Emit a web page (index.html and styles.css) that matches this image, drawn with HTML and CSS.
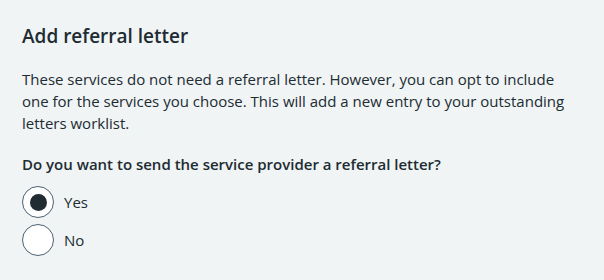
FILE: index.html
```html
<!DOCTYPE html>
<html lang="en">

<head>
  <meta charset="utf-8">
  <title>Add referral letter</title>
  <link rel="stylesheet" href="styles.css">
</head>

<body>
  <section class="referral">
    <h2 class="referral-title">Add referral letter</h2>
    <p class="referral-hint">
      These services do not need a referral letter. However, you can opt to include
      one for the services you choose. This will add a new entry to your outstanding
      letters worklist.
    </p>
    <fieldset class="radios">
      <legend class="radios-legend">Do you want to send the service provider a referral letter?</legend>
      <!-- Yes -->
      <label class="radio">
        <input type="radio" name="referral" value="yes" checked>
        <span class="radio-mark"></span>
        <span class="radio-label">Yes</span>
      </label>
      <!-- No -->
      <label class="radio">
        <input type="radio" name="referral" value="no">
        <span class="radio-mark"></span>
        <span class="radio-label">No</span>
      </label>
    </fieldset>
  </section>
</body>

</html>
```

FILE: styles.css
```css
body {
  margin: 0;
  background-color: #f0f4f5;
  color: #212b32;
  font-family: "Open Sans", "Noto Sans", sans-serif;
}

.referral {
  padding: 22px 22px 0 22px;
}

.referral-title {
  margin: 0 0 18px 0;
  font-size: 19px;
  font-weight: 600;
  line-height: 28px;
}

.referral-hint {
  margin: 0 0 18px 0;
  font-size: 15px;
  line-height: 22px;
}

.radios {
  margin: 0;
  padding: 0;
  border: none;
}

.radios-legend {
  padding: 0;
  margin-bottom: 10px;
  font-size: 15px;
  font-weight: 600;
  line-height: 24px;
}

.radio {
  display: flex;
  align-items: center;
  gap: 10px;
  margin-bottom: 6px;
  cursor: pointer;
}

.radio>input {
  display: none;
}

.radio-mark {
  box-sizing: border-box;
  width: 32px;
  height: 32px;
  border: 1.5px solid #4c6272;
  border-radius: 50%;
  background-color: white;
  display: flex;
  align-items: center;
  justify-content: center;
}

.radio>input:checked+.radio-mark::after {
  content: "";
  width: 17px;
  height: 17px;
  border-radius: 50%;
  background-color: #212b32;
}

.radio-label {
  font-size: 15px;
  line-height: 24px;
}
```
